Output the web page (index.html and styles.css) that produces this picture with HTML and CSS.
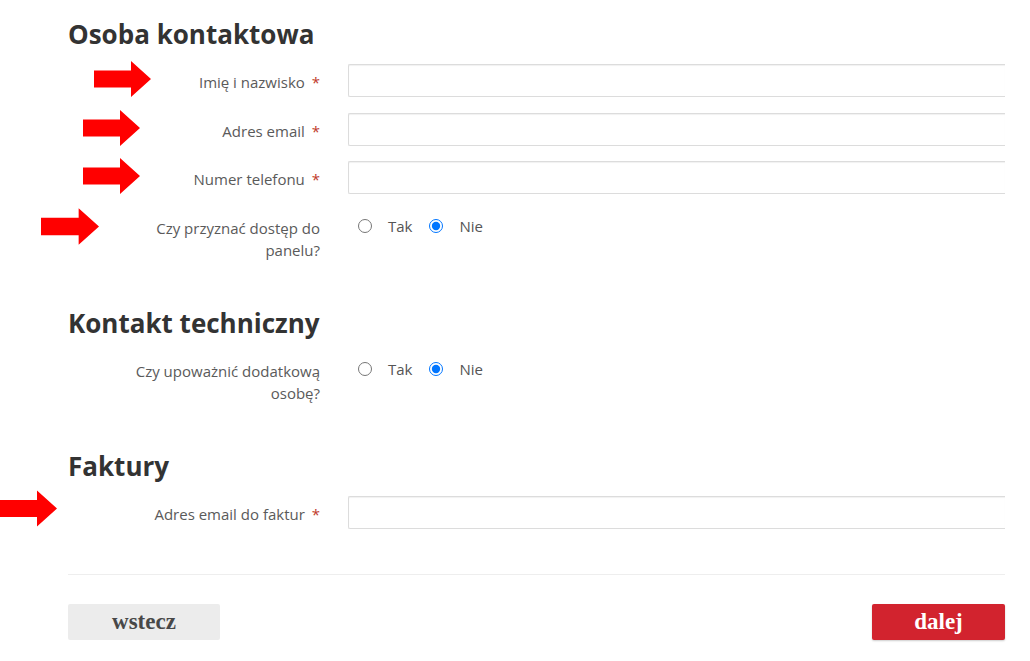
FILE: index.html
```html
<!DOCTYPE html>
<html lang="pl">
<head>
<meta charset="utf-8">
<title>Dane kontaktowe</title>
<link rel="stylesheet" href="styles.css">
</head>
<body>
<div class="page">
  <form class="form">
    <section class="section">
      <h2 class="section-title">Osoba kontaktowa</h2>
      <div class="row">
        <label class="label">Imię i nazwisko <span class="req">*</span></label>
        <div class="field"><input class="input" type="text"></div>
      </div>
      <div class="row">
        <label class="label">Adres email <span class="req">*</span></label>
        <div class="field"><input class="input" type="text"></div>
      </div>
      <div class="row">
        <label class="label">Numer telefonu <span class="req">*</span></label>
        <div class="field"><input class="input" type="text"></div>
      </div>
      <div class="row">
        <label class="label">Czy przyznać dostęp do panelu?</label>
        <div class="radios">
          <label class="radio"><input type="radio" name="panel"><span>Tak</span></label>
          <label class="radio"><input type="radio" name="panel" checked><span>Nie</span></label>
        </div>
      </div>
    </section>

    <section class="section">
      <h2 class="section-title">Kontakt techniczny</h2>
      <div class="row">
        <label class="label">Czy upoważnić dodatkową osobę?</label>
        <div class="radios">
          <label class="radio"><input type="radio" name="tech"><span>Tak</span></label>
          <label class="radio"><input type="radio" name="tech" checked><span>Nie</span></label>
        </div>
      </div>
    </section>

    <section class="section">
      <h2 class="section-title">Faktury</h2>
      <div class="row">
        <label class="label">Adres email do faktur <span class="req">*</span></label>
        <div class="field"><input class="input" type="text"></div>
      </div>
    </section>

    <div class="actions">
      <button type="button" class="btn btn-back">wstecz</button>
      <button type="button" class="btn btn-next">dalej</button>
    </div>
  </form>

  <svg class="arrow arrow-1" viewBox="0 0 57 36" aria-hidden="true"><polygon points="0,9.5 37,9.5 37,0 57,18 37,36 37,26.5 0,26.5"/></svg>
  <svg class="arrow arrow-2" viewBox="0 0 57 36" aria-hidden="true"><polygon points="0,9.5 37,9.5 37,0 57,18 37,36 37,26.5 0,26.5"/></svg>
  <svg class="arrow arrow-3" viewBox="0 0 57 36" aria-hidden="true"><polygon points="0,9.5 37,9.5 37,0 57,18 37,36 37,26.5 0,26.5"/></svg>
  <svg class="arrow arrow-4" viewBox="0 0 57 36" aria-hidden="true"><polygon points="0,9.5 37,9.5 37,0 57,18 37,36 37,26.5 0,26.5"/></svg>
  <svg class="arrow arrow-5" viewBox="0 0 57 36" aria-hidden="true"><polygon points="0,9.5 37,9.5 37,0 57,18 37,36 37,26.5 0,26.5"/></svg>
</div>
</body>
</html>
```

FILE: styles.css
```css
* { box-sizing: border-box; }

html, body {
  margin: 0;
  padding: 0;
  background: #ffffff;
}

body {
  font-family: "Open Sans", "DejaVu Sans", sans-serif;
  color: #555;
}

.page {
  position: relative;
  width: 1030px;
  height: 661px;
  overflow: hidden;
}

.form {
  width: 937px;
  margin-left: 68px;
  padding-top: 19px;
}

.section + .section {
  margin-top: 47px;
}

.section-title {
  margin: 0 0 15px 0;
  font-size: 26px;
  line-height: 30px;
  font-weight: 700;
  color: #333;
}

.row {
  display: grid;
  grid-template-columns: 252px 1fr;
  column-gap: 28px;
  align-items: start;
}

.row + .row {
  margin-top: 15.5px;
}

.label {
  padding: 7px 0 0 48px;
  text-align: right;
  font-size: 15px;
  line-height: 22px;
  color: #5a5a5a;
}

.req {
  color: #c0392b;
  margin-left: 3px;
}

.field {
  overflow: hidden;
}

.input {
  display: block;
  width: 100%;
  height: 33px;
  margin: 0;
  border: 1px solid #dcdcdc;
  border-right: none;
  border-radius: 2px 0 0 2px;
  box-shadow: inset 0 1px 1px rgba(0, 0, 0, 0.06);
  background: #fff;
  font-family: inherit;
  font-size: 14px;
}

.radios {
  display: flex;
  align-items: center;
  padding: 5px 0 0 10px;
  height: 27px;
}

.radio {
  display: flex;
  align-items: center;
  font-size: 15px;
  line-height: 22px;
  color: #555;
}

.radio + .radio {
  margin-left: 17px;
}

.radio input {
  margin: 0 16px 0 0;
  width: 14px;
  height: 14px;
}

.actions {
  margin-top: 45px;
  border-top: 1px solid #eeeeee;
  padding-top: 29px;
  display: flex;
  justify-content: space-between;
}

.btn {
  height: 36px;
  border: none;
  border-radius: 2px;
  font-family: "Liberation Serif", "Times New Roman", serif;
  font-weight: 700;
  font-size: 23px;
  line-height: 36px;
  padding: 0;
  cursor: pointer;
}

.btn-back {
  width: 152px;
  background: #ececec;
  color: #484848;
}

.btn-next {
  width: 133px;
  background: #d2232e;
  color: #fff;
  box-shadow: 0 1px 2px rgba(0, 0, 0, 0.2);
}

.arrow {
  position: absolute;
  fill: #ff0000;
  width: 57px;
  height: 36px;
}

.arrow-1 { left: 94px; top: 61px; }
.arrow-2 { left: 83px; top: 110px; }
.arrow-3 { left: 83px; top: 158px; }
.arrow-4 { left: 41px; top: 208px; width: 58px; height: 37px; }
.arrow-5 { left: 0; top: 490px; height: 37px; }
```
